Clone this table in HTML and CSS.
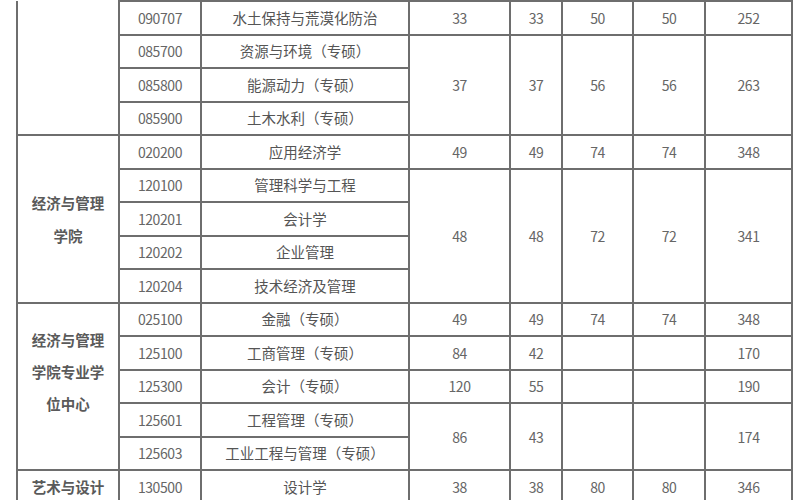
FILE: index.html
```html
<!DOCTYPE html>
<html lang="zh-CN">
<head>
<meta charset="utf-8">
<title>招生计划表</title>
<link rel="stylesheet" href="styles.css">
</head>
<body>
<div class="page">
<table class="plan">
  <colgroup>
    <col class="c-college"><col class="c-code"><col class="c-name"><col class="c-n1"><col class="c-n2"><col class="c-n3"><col class="c-n4"><col class="c-n5">
  </colgroup>
  <tbody>
    <tr>
      <td class="college open-top" rowspan="4"></td>
      <td class="num">090707</td><td class="name">水土保持与荒漠化防治</td>
      <td class="num">33</td><td class="num">33</td><td class="num">50</td><td class="num">50</td><td class="num">252</td>
    </tr>
    <tr>
      <td class="num">085700</td><td class="name">资源与环境（专硕）</td>
      <td class="num" rowspan="3">37</td><td class="num" rowspan="3">37</td><td class="num" rowspan="3">56</td><td class="num" rowspan="3">56</td><td class="num" rowspan="3">263</td>
    </tr>
    <tr><td class="num">085800</td><td class="name">能源动力（专硕）</td></tr>
    <tr><td class="num">085900</td><td class="name">土木水利（专硕）</td></tr>

    <tr>
      <td class="college college-econ" rowspan="5">经济与管理学院</td>
      <td class="num">020200</td><td class="name">应用经济学</td>
      <td class="num">49</td><td class="num">49</td><td class="num">74</td><td class="num">74</td><td class="num">348</td>
    </tr>
    <tr>
      <td class="num">120100</td><td class="name">管理科学与工程</td>
      <td class="num" rowspan="4">48</td><td class="num" rowspan="4">48</td><td class="num" rowspan="4">72</td><td class="num" rowspan="4">72</td><td class="num" rowspan="4">341</td>
    </tr>
    <tr><td class="num">120201</td><td class="name">会计学</td></tr>
    <tr><td class="num">120202</td><td class="name">企业管理</td></tr>
    <tr><td class="num">120204</td><td class="name">技术经济及管理</td></tr>

    <tr>
      <td class="college" rowspan="5">经济与管理学院专业学位中心</td>
      <td class="num">025100</td><td class="name">金融（专硕）</td>
      <td class="num">49</td><td class="num">49</td><td class="num">74</td><td class="num">74</td><td class="num">348</td>
    </tr>
    <tr>
      <td class="num">125100</td><td class="name">工商管理（专硕）</td>
      <td class="num">84</td><td class="num">42</td><td class="num"></td><td class="num"></td><td class="num">170</td>
    </tr>
    <tr>
      <td class="num">125300</td><td class="name">会计（专硕）</td>
      <td class="num">120</td><td class="num">55</td><td class="num"></td><td class="num"></td><td class="num">190</td>
    </tr>
    <tr>
      <td class="num">125601</td><td class="name">工程管理（专硕）</td>
      <td class="num" rowspan="2">86</td><td class="num" rowspan="2">43</td><td class="num" rowspan="2"></td><td class="num" rowspan="2"></td><td class="num" rowspan="2">174</td>
    </tr>
    <tr><td class="num">125603</td><td class="name">工业工程与管理（专硕）</td></tr>

    <tr>
      <td class="college single">艺术与设计</td>
      <td class="num">130500</td><td class="name">设计学</td>
      <td class="num">38</td><td class="num">38</td><td class="num">80</td><td class="num">80</td><td class="num">346</td>
    </tr>
  </tbody>
</table>
</div>
</body>
</html>
```

FILE: styles.css
```css
html, body {
  margin: 0;
  padding: 0;
  background: #ffffff;
}

.page {
  width: 800px;
  height: 500px;
  overflow: hidden;
  padding-left: 16px;
  box-sizing: border-box;
}

.plan {
  border-collapse: collapse;
  table-layout: fixed;
  width: 777px;
  font-family: "Noto Sans CJK SC", "Noto Sans", sans-serif;
  color: #555555;
}

.c-college { width: 102px; }
.c-code { width: 82px; }
.c-name { width: 208px; }
.c-n1 { width: 101px; }
.c-n2 { width: 52px; }
.c-n3 { width: 71px; }
.c-n4 { width: 72px; }
.c-n5 { width: 87px; }

.plan tr {
  height: 33.5px;
}

.plan td {
  border: 2px solid #6e6e6e;
  padding: 0;
  text-align: center;
  vertical-align: middle;
  line-height: 20px;
}

.plan .open-top {
  border-top-style: hidden;
}

.num {
  font-size: 14px;
  letter-spacing: -0.4px;
  color: #666666;
}

.name {
  font-size: 14.5px;
}

.college {
  font-size: 14.5px;
  font-weight: bold;
  color: #5a5a5a;
  padding: 0 10px 29px 10px !important;
  line-height: 32px !important;
}

.college.college-econ {
  padding-bottom: 0 !important;
  line-height: 33px !important;
}

.college.single {
  padding: 0 10px !important;
  line-height: 20px !important;
}
```
